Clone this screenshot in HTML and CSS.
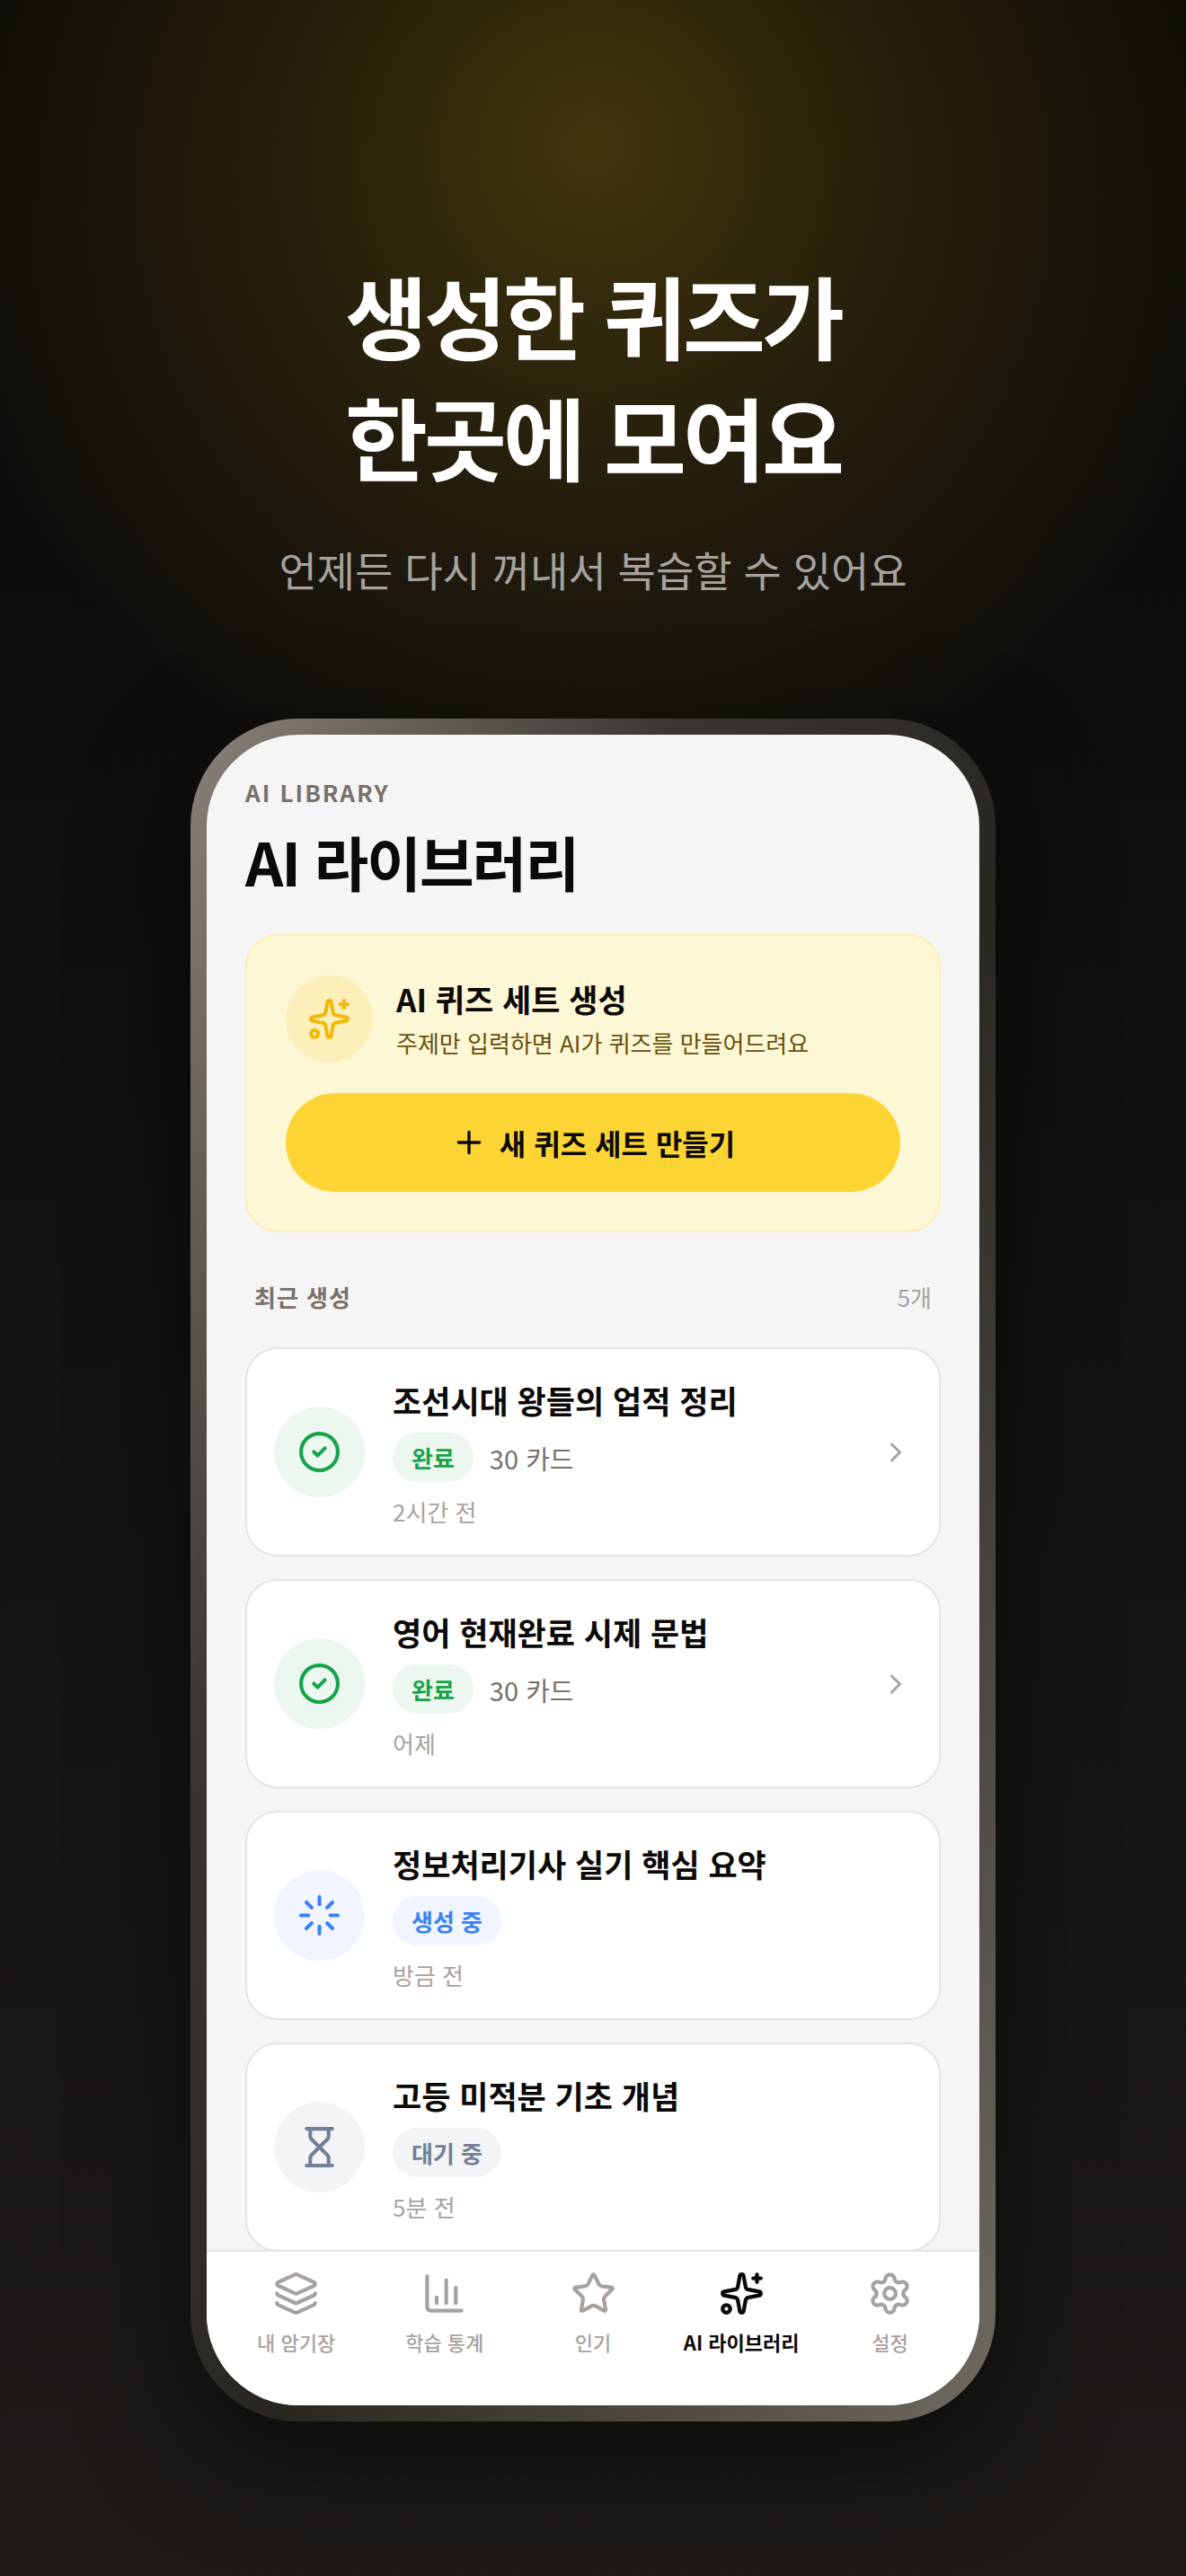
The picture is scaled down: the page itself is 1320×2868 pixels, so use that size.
FILE: index.html
```
<!DOCTYPE html>
<html lang="ko">

<head>
	<meta charset="utf-8">
	<meta name="viewport" content="width=device-width, initial-scale=1">
	<title>AI 라이브러리</title>
	<link rel="stylesheet" href="styles.css">
</head>

<body>
	<!-- shared icons -->
	<svg class="sprite" aria-hidden="true">
		<symbol id="sparkles" viewBox="0 0 24 24">
			<path d="M11.017 2.814a1 1 0 0 1 1.966 0l1.051 5.558a2 2 0 0 0 1.594 1.594l5.558 1.051a1 1 0 0 1 0 1.966l-5.558 1.051a2 2 0 0 0-1.594 1.594l-1.051 5.558a1 1 0 0 1-1.966 0l-1.051-5.558a2 2 0 0 0-1.594-1.594l-5.558-1.051a1 1 0 0 1 0-1.966l5.558-1.051a2 2 0 0 0 1.594-1.594z" />
			<path d="M20 2v4" />
			<path d="M22 4h-4" />
			<circle cx="4" cy="20" r="2" />
		</symbol>
		<symbol id="check" viewBox="0 0 24 24">
			<circle cx="12" cy="12" r="10" />
			<path d="m9 12 2 2 4-4" />
		</symbol>
		<symbol id="chevron" viewBox="0 0 24 24">
			<path d="m9 18 6-6-6-6" />
		</symbol>
	</svg>

	<header class="hero">
		<h1>생성한 퀴즈가<br>한곳에 모여요</h1>
		<p>언제든 다시 꺼내서 복습할 수 있어요</p>
	</header>

	<div class="phone">
		<div class="screen">
			<main class="content">
				<p class="eyebrow">AI LIBRARY</p>
				<h2 class="page-title">AI 라이브러리</h2>

				<section class="create-card">
					<div class="create-head">
						<span class="create-icon"><svg class="icon"><use href="#sparkles" /></svg></span>
						<div>
							<h3>AI 퀴즈 세트 생성</h3>
							<p>주제만 입력하면 AI가 퀴즈를 만들어드려요</p>
						</div>
					</div>
					<button type="button" class="create-button">
						<svg class="icon icon-plus" viewBox="0 0 24 24"><path d="M5 12h14" /><path d="M12 5v14" /></svg>
						새 퀴즈 세트 만들기
					</button>
				</section>

				<div class="section-head">
					<h3>최근 생성</h3>
					<span>5개</span>
				</div>

				<ul class="quiz-list">
					<li>
						<a href="#" class="quiz done">
							<span class="quiz-icon"><svg class="icon"><use href="#check" /></svg></span>
							<div class="quiz-body">
								<h4>조선시대 왕들의 업적 정리</h4>
								<div class="quiz-meta"><span class="badge">완료</span><span class="count">30 카드</span></div>
								<time>2시간 전</time>
							</div>
							<svg class="icon icon-chevron"><use href="#chevron" /></svg>
						</a>
					</li>
					<li>
						<a href="#" class="quiz done">
							<span class="quiz-icon"><svg class="icon"><use href="#check" /></svg></span>
							<div class="quiz-body">
								<h4>영어 현재완료 시제 문법</h4>
								<div class="quiz-meta"><span class="badge">완료</span><span class="count">30 카드</span></div>
								<time>어제</time>
							</div>
							<svg class="icon icon-chevron"><use href="#chevron" /></svg>
						</a>
					</li>
					<li class="quiz loading">
						<span class="quiz-icon">
							<svg class="icon" viewBox="0 0 24 24">
								<path d="M12 2v4" />
								<path d="m16.2 7.8 2.9-2.9" />
								<path d="M18 12h4" />
								<path d="m16.2 16.2 2.9 2.9" />
								<path d="M12 18v4" />
								<path d="m4.9 19.1 2.9-2.9" />
								<path d="M2 12h4" />
								<path d="m4.9 4.9 2.9 2.9" />
							</svg>
						</span>
						<div class="quiz-body">
							<h4>정보처리기사 실기 핵심 요약</h4>
							<div class="quiz-meta"><span class="badge">생성 중</span></div>
							<time>방금 전</time>
						</div>
					</li>
					<li class="quiz waiting">
						<span class="quiz-icon">
							<svg class="icon" viewBox="0 0 24 24">
								<path d="M5 22h14" />
								<path d="M5 2h14" />
								<path d="M17 22v-4.172a2 2 0 0 0-.586-1.414L12 12l-4.414 4.414A2 2 0 0 0 7 17.828V22" />
								<path d="M7 2v4.172a2 2 0 0 0 .586 1.414L12 12l4.414-4.414A2 2 0 0 0 17 6.172V2" />
							</svg>
						</span>
						<div class="quiz-body">
							<h4>고등 미적분 기초 개념</h4>
							<div class="quiz-meta"><span class="badge">대기 중</span></div>
							<time>5분 전</time>
						</div>
					</li>
				</ul>
			</main>

			<nav class="tabs">
				<a href="#">
					<svg class="icon" viewBox="0 0 24 24">
						<path d="M12.83 2.18a2 2 0 0 0-1.66 0L2.6 6.08a1 1 0 0 0 0 1.83l8.58 3.91a2 2 0 0 0 1.66 0l8.58-3.9a1 1 0 0 0 0-1.83z" />
						<path d="M2 12a1 1 0 0 0 .58.91l8.6 3.91a2 2 0 0 0 1.65 0l8.58-3.9A1 1 0 0 0 22 12" />
						<path d="M2 17a1 1 0 0 0 .58.91l8.6 3.91a2 2 0 0 0 1.65 0l8.58-3.9A1 1 0 0 0 22 17" />
					</svg>
					내 암기장
				</a>
				<a href="#">
					<svg class="icon" viewBox="0 0 24 24">
						<path d="M3 3v16a2 2 0 0 0 2 2h16" />
						<path d="M18 17V9" />
						<path d="M13 17V5" />
						<path d="M8 17v-3" />
					</svg>
					학습 통계
				</a>
				<a href="#">
					<svg class="icon" viewBox="0 0 24 24">
						<path d="M11.525 2.295a.53.53 0 0 1 .95 0l2.31 4.679a2.123 2.123 0 0 0 1.595 1.16l5.166.756a.53.53 0 0 1 .294.904l-3.736 3.638a2.123 2.123 0 0 0-.611 1.878l.882 5.14a.53.53 0 0 1-.771.56l-4.618-2.428a2.122 2.122 0 0 0-1.973 0L6.396 21.01a.53.53 0 0 1-.77-.56l.881-5.139a2.122 2.122 0 0 0-.611-1.879L2.16 9.795a.53.53 0 0 1 .294-.906l5.165-.755a2.122 2.122 0 0 0 1.597-1.16z" />
					</svg>
					인기
				</a>
				<a href="#" class="active" aria-current="page">
					<svg class="icon"><use href="#sparkles" /></svg>
					AI 라이브러리
				</a>
				<a href="#">
					<svg class="icon" viewBox="0 0 24 24">
						<path d="M9.671 4.136a2.34 2.34 0 0 1 4.659 0 2.34 2.34 0 0 0 3.319 1.915 2.34 2.34 0 0 1 2.33 4.033 2.34 2.34 0 0 0 0 3.831 2.34 2.34 0 0 1-2.33 4.033 2.34 2.34 0 0 0-3.319 1.915 2.34 2.34 0 0 1-4.659 0 2.34 2.34 0 0 0-3.32-1.915 2.34 2.34 0 0 1-2.33-4.033 2.34 2.34 0 0 0 0-3.831A2.34 2.34 0 0 1 6.35 6.051a2.34 2.34 0 0 0 3.319-1.915" />
						<circle cx="12" cy="12" r="3" />
					</svg>
					설정
				</a>
			</nav>
		</div>
	</div>
</body>

</html>
```
FILE: styles.css
```
* {
	box-sizing: border-box;
	margin: 0;
	padding: 0;
}

body {
	min-height: 100vh;
	padding: 282px 16px 172px;
	background:
		radial-gradient(circle 760px at 50% 160px, rgba(250, 204, 21, 0.22), rgba(250, 204, 21, 0.09) 50%, transparent),
		linear-gradient(#0c0a09, #1c1917);
	color: #0c0a09;
	font-family: "Noto Sans CJK KR", "Noto Sans", sans-serif;
	font-size: 26px;
	line-height: 36px;
}

a {
	color: inherit;
	text-decoration: none;
}

ul {
	list-style: none;
}

.sprite {
	position: absolute;
	width: 0;
	height: 0;
}

.icon {
	display: block;
	flex: none;
	width: 49px;
	height: 49px;
	fill: none;
	stroke: currentColor;
	stroke-width: 2;
	stroke-linecap: round;
	stroke-linejoin: round;
}

/* headline */
.hero {
	text-align: center;
}

.hero h1 {
	color: #fff;
	font-size: 100px;
	font-weight: 700;
	line-height: 135px;
	letter-spacing: -4px;
}

.hero p {
	margin: 46px 0 132px;
	color: #a8a29e;
	font-size: 46px;
	line-height: 70px;
}

/* device */
.phone {
	max-width: 896px;
	margin: 0 auto;
	padding: 18px;
	border-radius: 120px;
	background: linear-gradient(to bottom right, #8a837b, #3a3632 30%, #292520 55%, #6f6a62);
	box-shadow: 0 40px 120px rgba(0, 0, 0, 0.5);
}

.screen {
	overflow: hidden;
	border-radius: 102px;
	background: #f5f5f5;
}

.content {
	padding: 44px 43px 0;
}

.eyebrow {
	margin-bottom: 2px;
	color: #78716c;
	font-weight: 600;
	line-height: 40px;
	letter-spacing: 2px;
}

.page-title {
	margin-bottom: 28px;
	font-size: 66px;
	font-weight: 700;
	line-height: 108px;
	letter-spacing: -2px;
}

/* create card */
.create-card {
	padding: 43px;
	border: 2px solid #fdeeb5;
	border-radius: 36px;
	background: #fef7d6;
}

.create-head {
	display: flex;
	align-items: center;
	gap: 26px;
	margin-bottom: 34px;
}

.create-icon {
	display: grid;
	place-items: center;
	flex: none;
	width: 97px;
	height: 97px;
	border-radius: 50%;
	background: #fdefb9;
	color: #f0b90b;
}

.create-head h3 {
	font-size: 35px;
	font-weight: 700;
	line-height: 54px;
}

.create-head p {
	color: #66500a;
	line-height: 44px;
}

.create-button {
	display: flex;
	align-items: center;
	justify-content: center;
	gap: 14px;
	width: 100%;
	height: 110px;
	border: none;
	border-radius: 55px;
	background: #fcd535;
	color: #0c0a09;
	font: 600 32px "Noto Sans CJK KR", "Noto Sans", sans-serif;
	cursor: pointer;
}

.icon-plus {
	width: 40px;
	height: 40px;
}

/* recent list */
.section-head {
	display: flex;
	justify-content: space-between;
	padding: 54px 10px 38px;
}

.section-head h3 {
	color: #78716c;
	font-size: 26px;
	font-weight: 600;
	letter-spacing: 1px;
}

.section-head span {
	color: #a8a29e;
}

/* the last card slides under the tab bar's border */
.quiz-list {
	display: grid;
	gap: 25px;
	margin-bottom: -2px;
}

.quiz {
	display: flex;
	align-items: center;
	gap: 31px;
	padding: 30px;
	border: 2px solid #e7e5e4;
	border-radius: 36px;
	background: #fff;
}

.quiz-icon {
	display: grid;
	place-items: center;
	flex: none;
	width: 101px;
	height: 101px;
	border-radius: 50%;
}

.quiz-body {
	flex: 1;
}

.quiz h4 {
	font-size: 35px;
	font-weight: 600;
	line-height: 54px;
}

.quiz-meta {
	display: flex;
	align-items: center;
	gap: 18px;
	margin: 9px 0 15px;
}

.badge {
	padding: 0 21px;
	border-radius: 28px;
	font-weight: 600;
	line-height: 55px;
}

.count {
	color: #78716c;
	font-size: 29px;
}

.quiz time {
	display: block;
	color: #a8a29e;
}

.icon-chevron {
	width: 36px;
	height: 36px;
	color: #a8a29e;
}

.done .quiz-icon,
.done .badge {
	background: #ecf7f0;
	color: #16a34a;
}

.loading .quiz-icon,
.loading .badge {
	background: #f0f5ff;
	color: #3b82f6;
}

.waiting .quiz-icon,
.waiting .badge {
	background: #f3f4f6;
	color: #718096;
}

/* bottom tabs */
.tabs {
	position: relative;
	display: flex;
	height: 173px;
	padding: 21px 17px 0;
	border-top: 2px solid #e7e5e4;
	background: #fff;
	color: #a8a29e;
	font-size: 22px;
	font-weight: 500;
	line-height: 32px;
}

.tabs a {
	display: flex;
	flex: 1 1 0;
	flex-direction: column;
	align-items: center;
	gap: 12px;
	white-space: nowrap;
}

.tabs .icon {
	width: 51px;
	height: 51px;
}

.tabs .active {
	color: #0c0a09;
	font-weight: 600;
}
```
